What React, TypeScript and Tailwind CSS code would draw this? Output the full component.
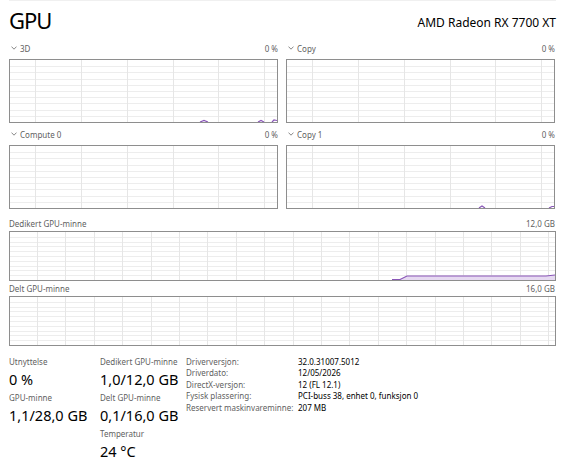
import React from 'react';

type GraphProps = {
  w: number;
  h: number;
  cols: number[];
  rows: number;
  line?: string;
  fill?: string;
};

const Graph: React.FC<GraphProps> = function Graph({ w, h, cols, rows, line, fill }) {
  const rowLines = Array.from({ length: rows - 1 }, (_, i) => Math.round(((i + 1) * h) / rows) + 0.5);
  return (
    <div className="border border-[#8e8e8e] bg-white" style={{ width: w + 2, height: h + 2 }}>
      <svg width={w} height={h} className="block">
        {rowLines.map((y) => (
          <line key={`r${y}`} x1={0} x2={w} y1={y} y2={y} stroke="#ededed" strokeWidth={1} />
        ))}
        {cols.map((x) => (
          <line key={`c${x}`} x1={x + 0.5} x2={x + 0.5} y1={0} y2={h} stroke="#e6e6e6" strokeWidth={1} />
        ))}
        {fill && <path d={fill} fill="#e6d9f1" />}
        {line && <path d={line} fill="none" stroke="#8a57b8" strokeWidth={1.2} />}
      </svg>
    </div>
  );
};

const smallCols = [25, 71, 117, 163, 208, 254];
const bigCols = Array.from({ length: 19 }, (_, i) => Math.round(27 + i * 28.4));

const GraphHeader: React.FC<{ label: string; value: string; chevron?: boolean }> = function GraphHeader({
  label,
  value,
  chevron,
}) {
  return (
    <div
      className={`flex justify-between items-center ${chevron ? 'h-[14px]' : 'h-[12px]'} text-[8px] leading-[11px] text-[#5f5f5f] whitespace-nowrap pr-[1px]`}
    >
      <span className="flex items-center">
        {chevron && (
          <svg width="6" height="4" viewBox="0 0 6 4" className="ml-[2px] mr-[3px]">
            <path d="M0.5 0.6 L3 3.2 L5.5 0.6" fill="none" stroke="#6a6a6a" strokeWidth="0.8" />
          </svg>
        )}
        {label}
      </span>
      <span>{value}</span>
    </div>
  );
};

const Stat: React.FC<{ label: string; value: string }> = function Stat({ label, value }) {
  return (
    <div className="flex flex-col whitespace-nowrap">
      <span className="text-[8px] leading-[12px] text-[#5f5f5f]">{label}</span>
      <span className="text-[14.5px] leading-[22px] text-black">{value}</span>
    </div>
  );
};

const details: [string, string][] = [
  ['Driverversjon:', '32.0.31007.5012'],
  ['Driverdato:', '12/05/2026'],
  ['DirectX-versjon:', '12 (FL 12.1)'],
  ['Fysisk plassering:', 'PCI-buss 38, enhet 0, funksjon 0'],
  ['Reservert maskinvareminne:', '207 MB'],
];

export default function App() {
  return (
    <div
      className="w-[575px] h-[472px] bg-white overflow-hidden pl-[9px] pr-[19px]"
      style={{ fontFamily: '"Noto Sans", "Open Sans", sans-serif' }}
    >
      <div className="flex justify-between items-end h-[34px] border-t border-[#f0f0f0]">
        <span className="text-[22px] leading-[28px] tracking-[-1px] text-black">GPU</span>
        <span className="text-[12px] leading-[18px] text-black mb-[2px]">AMD Radeon RX 7700 XT</span>
      </div>

      <div className="grid grid-cols-2 gap-x-[7px] mt-[7px]">
        <div className="flex flex-col gap-[4px]">
          <GraphHeader label="3D" value="0 %" chevron />
          <Graph
            w={267}
            h={62}
            cols={smallCols}
            rows={10}
            line="M190 62 L194 60.5 L198 62 M248 62 L251 60.5 L254 62 M262 62 L264 60 L267 60.5"
          />
        </div>
        <div className="flex flex-col gap-[4px]">
          <GraphHeader label="Copy" value="0 %" chevron />
          <Graph w={267} h={62} cols={smallCols} rows={10} />
        </div>
        <div className="flex flex-col gap-[4px] mt-[4px]">
          <GraphHeader label="Compute 0" value="0 %" chevron />
          <Graph w={267} h={62} cols={smallCols} rows={10} />
        </div>
        <div className="flex flex-col gap-[4px] mt-[4px]">
          <GraphHeader label="Copy 1" value="0 %" chevron />
          <Graph
            w={267}
            h={62}
            cols={smallCols}
            rows={10}
            line="M192 62 L195 60 L198 62 M262 62 L265 60.5 L267 60.5"
          />
        </div>
      </div>

      <div className="flex flex-col gap-[2px] mt-[8px]">
        <GraphHeader label="Dedikert GPU-minne" value="12,0 GB" />
        <Graph
          w={545}
          h={48}
          cols={bigCols}
          rows={10}
          fill="M390 48 L397 44 L536 44 L545 43 L545 48 Z"
          line="M382 47.5 L390 47.5 L397 44 L536 44 L545 43"
        />
      </div>

      <div className="flex flex-col gap-[2px] mt-[1px]">
        <GraphHeader label="Delt GPU-minne" value="16,0 GB" />
        <Graph w={545} h={48} cols={bigCols} rows={10} />
      </div>

      <div className="flex items-start mt-[10px]">
        <div className="flex flex-col gap-[2px] w-[91px]">
          <Stat label="Utnyttelse" value="0 %" />
          <Stat label="GPU-minne" value="1,1/28,0 GB" />
        </div>
        <div className="flex flex-col gap-[2px] w-[86px]">
          <Stat label="Dedikert GPU-minne" value="1,0/12,0 GB" />
          <Stat label="Delt GPU-minne" value="0,1/16,0 GB" />
          <Stat label="Temperatur" value="24 °C" />
        </div>
        <div className="grid grid-cols-[112px_auto] content-start text-[8px] leading-[11.4px] whitespace-nowrap">
          {details.map(([k, v]) => (
            <React.Fragment key={k}>
              <span className="text-[#5f5f5f]">{k}</span>
              <span className="text-black">{v}</span>
            </React.Fragment>
          ))}
        </div>
      </div>
    </div>
  );
}
